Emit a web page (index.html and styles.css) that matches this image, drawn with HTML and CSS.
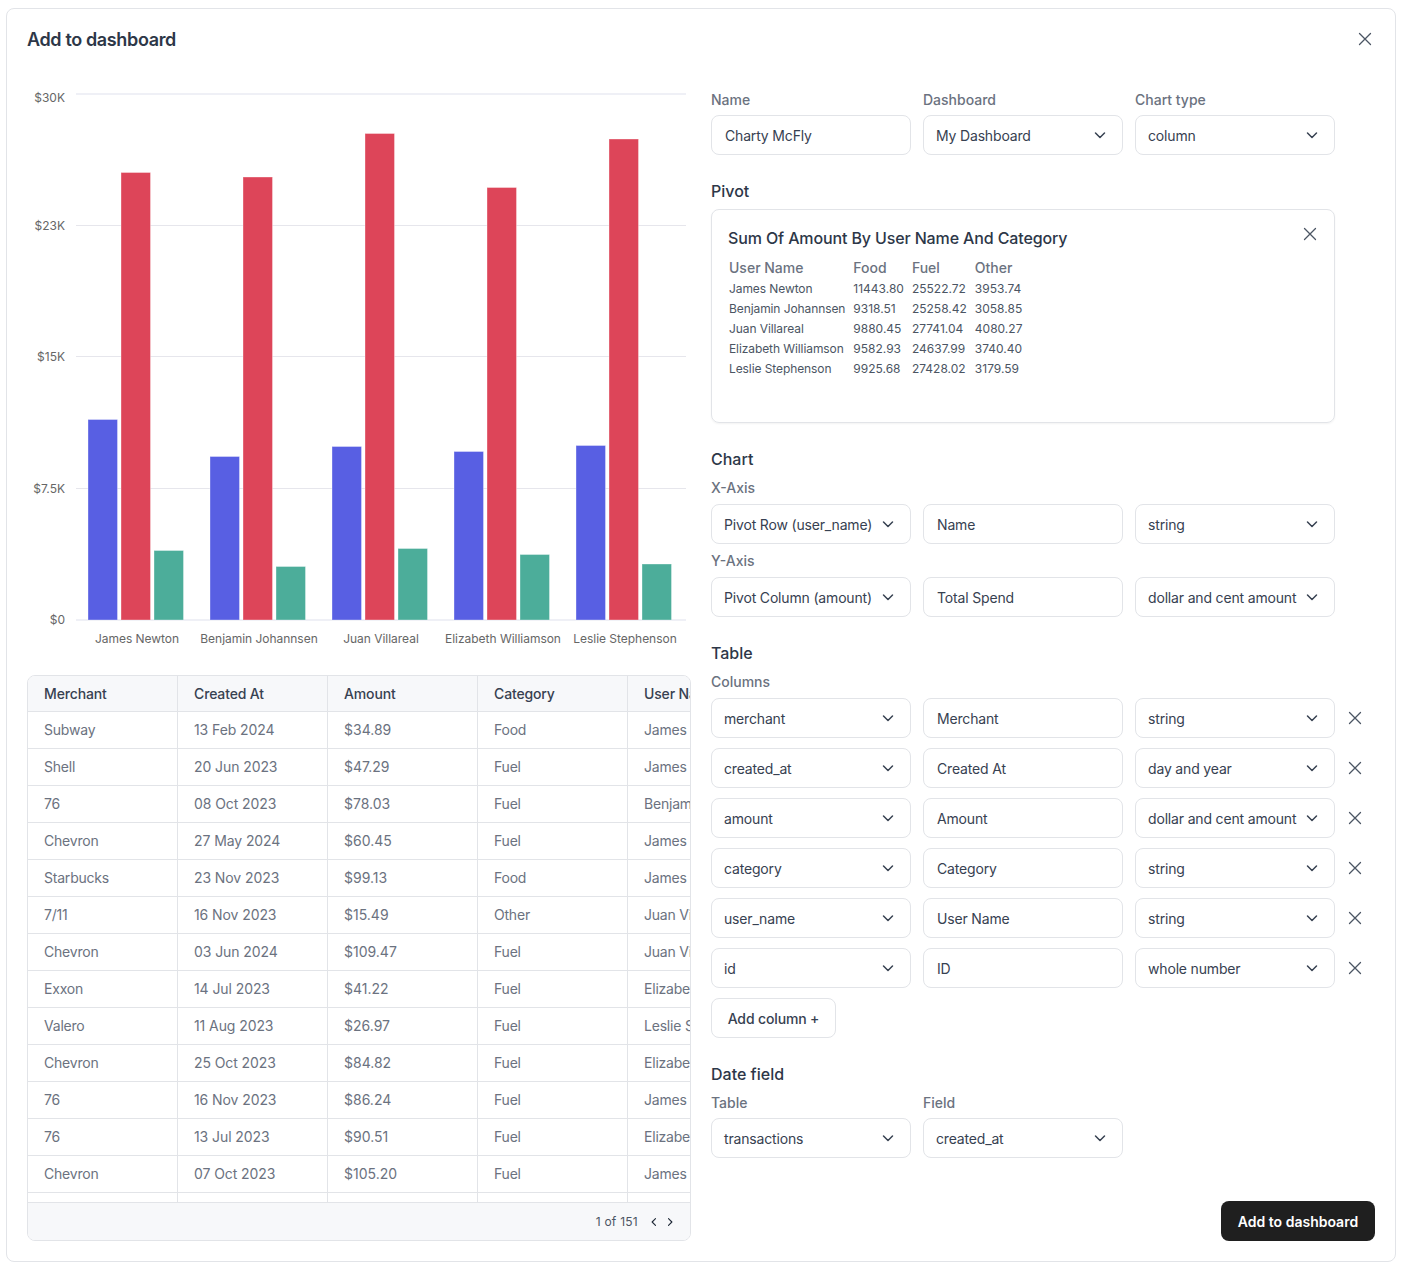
FILE: index.html
```html
<!DOCTYPE html>
<html lang="en">
<head>
<meta charset="utf-8">
<title>Add to dashboard</title>
<link rel="stylesheet" href="styles.css">
</head>
<body>
<svg class="sprite" aria-hidden="true">
  <symbol id="chev" viewBox="0 0 16 16"><path d="M3.500 6l4.500 4.500L12.500 6" fill="none" stroke="currentColor" stroke-width="1.500" stroke-linecap="round" stroke-linejoin="round"/></symbol>
  <symbol id="close" viewBox="0 0 16 16"><path d="M2.500 2.500l11 11M13.500 2.500l-11 11" fill="none" stroke="currentColor" stroke-width="1.300" stroke-linecap="round"/></symbol>
</svg>
<main class="modal">
  <header class="modal-head">
    <h1 class="modal-title">Add to dashboard</h1>
    <svg class="icon-close"><use href="#close"/></svg>
  </header>
  <div class="modal-body">
    <section class="left">
      <svg class="chart" viewBox="27 80 664 580" width="664" height="580">
        <g class="grid">
          <line class="grid-edge" x1="76" x2="686" y1="94" y2="94"/>
          <line x1="76" x2="686" y1="225.500" y2="225.500"/>
          <line x1="76" x2="686" y1="356.500" y2="356.500"/>
          <line x1="76" x2="686" y1="488.500" y2="488.500"/>
          <line class="grid-edge" x1="76" x2="686" y1="620" y2="620"/>
        </g>
        <g class="y-labels">
          <text x="65" y="102">$30K</text>
          <text x="65" y="230">$23K</text>
          <text x="65" y="361">$15K</text>
          <text x="65" y="493">$7.5K</text>
          <text x="65" y="624">$0</text>
        </g>
        <g class="bars-a">
          <rect x="88" y="419.500" width="29.500" height="200.500"/>
          <rect x="210" y="456.500" width="29.500" height="163.500"/>
          <rect x="332" y="446.500" width="29.500" height="173.500"/>
          <rect x="454" y="451.500" width="29.500" height="168.500"/>
          <rect x="576" y="445.500" width="29.500" height="174.500"/>
        </g>
        <g class="bars-b">
          <rect x="121" y="172.500" width="29.500" height="447.500"/>
          <rect x="243" y="177" width="29.500" height="443"/>
          <rect x="365" y="133.500" width="29.500" height="486.500"/>
          <rect x="487" y="187.500" width="29.500" height="432.500"/>
          <rect x="609" y="139" width="29.500" height="481"/>
        </g>
        <g class="bars-c">
          <rect x="154" y="550.500" width="29.500" height="69.500"/>
          <rect x="276" y="566.500" width="29.500" height="53.500"/>
          <rect x="398" y="548.500" width="29.500" height="71.500"/>
          <rect x="520" y="554.500" width="29.500" height="65.500"/>
          <rect x="642" y="564" width="29.500" height="56"/>
        </g>
        <g class="x-labels">
          <text x="137" y="643">James Newton</text>
          <text x="259" y="643">Benjamin Johannsen</text>
          <text x="381" y="643">Juan Villareal</text>
          <text x="503" y="643">Elizabeth Williamson</text>
          <text x="625" y="643">Leslie Stephenson</text>
        </g>
      </svg>
      <div class="grid-card">
        <div class="grid-scroll">
          <table class="data">
            <thead><tr><th>Merchant</th><th>Created At</th><th>Amount</th><th>Category</th><th>User Name</th></tr></thead>
            <tbody>
              <tr><td>Subway</td><td>13 Feb 2024</td><td>$34.89</td><td>Food</td><td>James Newton</td></tr>
              <tr><td>Shell</td><td>20 Jun 2023</td><td>$47.29</td><td>Fuel</td><td>James Newton</td></tr>
              <tr><td>76</td><td>08 Oct 2023</td><td>$78.03</td><td>Fuel</td><td>Benjamin Johannsen</td></tr>
              <tr><td>Chevron</td><td>27 May 2024</td><td>$60.45</td><td>Fuel</td><td>James Newton</td></tr>
              <tr><td>Starbucks</td><td>23 Nov 2023</td><td>$99.13</td><td>Food</td><td>James Newton</td></tr>
              <tr><td>7/11</td><td>16 Nov 2023</td><td>$15.49</td><td>Other</td><td>Juan Villareal</td></tr>
              <tr><td>Chevron</td><td>03 Jun 2024</td><td>$109.47</td><td>Fuel</td><td>Juan Villareal</td></tr>
              <tr><td>Exxon</td><td>14 Jul 2023</td><td>$41.22</td><td>Fuel</td><td>Elizabeth Williamson</td></tr>
              <tr><td>Valero</td><td>11 Aug 2023</td><td>$26.97</td><td>Fuel</td><td>Leslie Stephenson</td></tr>
              <tr><td>Chevron</td><td>25 Oct 2023</td><td>$84.82</td><td>Fuel</td><td>Elizabeth Williamson</td></tr>
              <tr><td>76</td><td>16 Nov 2023</td><td>$86.24</td><td>Fuel</td><td>James Newton</td></tr>
              <tr><td>76</td><td>13 Jul 2023</td><td>$90.51</td><td>Fuel</td><td>Elizabeth Williamson</td></tr>
              <tr><td>Chevron</td><td>07 Oct 2023</td><td>$105.20</td><td>Fuel</td><td>James Newton</td></tr>
              <tr><td></td><td></td><td></td><td></td><td></td></tr>
            </tbody>
          </table>
        </div>
        <footer class="grid-foot">
          <span class="page-count">1 of 151</span>
          <span class="pager">
            <svg class="icon-pg flip"><use href="#chev"/></svg>
            <svg class="icon-pg unflip"><use href="#chev"/></svg>
          </span>
        </footer>
      </div>
    </section>

    <section class="right">
      <div class="row3 row-top">
        <div class="field"><label class="lbl">Name</label><div class="input">Charty McFly</div></div>
        <div class="field"><label class="lbl">Dashboard</label><div class="select">My Dashboard<svg class="icon-chev"><use href="#chev"/></svg></div></div>
        <div class="field"><label class="lbl">Chart type</label><div class="select">column<svg class="icon-chev"><use href="#chev"/></svg></div></div>
      </div>

      <h2 class="sec sec-pivot">Pivot</h2>
      <div class="pivot">
        <div class="pivot-head">
          <h3 class="pivot-title">Sum Of Amount By User Name And Category</h3>
          <svg class="icon-close"><use href="#close"/></svg>
        </div>
        <table class="pt">
          <thead><tr><th>User Name</th><th>Food</th><th>Fuel</th><th>Other</th></tr></thead>
          <tbody>
            <tr><td>James Newton</td><td>11443.80</td><td>25522.72</td><td>3953.74</td></tr>
            <tr><td>Benjamin Johannsen</td><td>9318.51</td><td>25258.42</td><td>3058.85</td></tr>
            <tr><td>Juan Villareal</td><td>9880.45</td><td>27741.04</td><td>4080.27</td></tr>
            <tr><td>Elizabeth Williamson</td><td>9582.93</td><td>24637.99</td><td>3740.40</td></tr>
            <tr><td>Leslie Stephenson</td><td>9925.68</td><td>27428.02</td><td>3179.59</td></tr>
          </tbody>
        </table>
      </div>

      <h2 class="sec sec-chart">Chart</h2>
      <label class="lbl lbl-sub">X-Axis</label>
      <div class="row3">
        <div class="select">Pivot Row (user_name)<svg class="icon-chev"><use href="#chev"/></svg></div>
        <div class="input">Name</div>
        <div class="select">string<svg class="icon-chev"><use href="#chev"/></svg></div>
      </div>
      <label class="lbl lbl-sub lbl-y">Y-Axis</label>
      <div class="row3">
        <div class="select">Pivot Column (amount)<svg class="icon-chev"><use href="#chev"/></svg></div>
        <div class="input">Total Spend</div>
        <div class="select">dollar and cent amount<svg class="icon-chev"><use href="#chev"/></svg></div>
      </div>

      <h2 class="sec sec-table">Table</h2>
      <label class="lbl lbl-sub">Columns</label>
      <div class="cols">
        <div class="row3 row-x">
          <div class="select">merchant<svg class="icon-chev"><use href="#chev"/></svg></div>
          <div class="input">Merchant</div>
          <div class="select">string<svg class="icon-chev"><use href="#chev"/></svg></div>
          <svg class="icon-close icon-row"><use href="#close"/></svg>
        </div>
        <div class="row3 row-x">
          <div class="select">created_at<svg class="icon-chev"><use href="#chev"/></svg></div>
          <div class="input">Created At</div>
          <div class="select">day and year<svg class="icon-chev"><use href="#chev"/></svg></div>
          <svg class="icon-close icon-row"><use href="#close"/></svg>
        </div>
        <div class="row3 row-x">
          <div class="select">amount<svg class="icon-chev"><use href="#chev"/></svg></div>
          <div class="input">Amount</div>
          <div class="select">dollar and cent amount<svg class="icon-chev"><use href="#chev"/></svg></div>
          <svg class="icon-close icon-row"><use href="#close"/></svg>
        </div>
        <div class="row3 row-x">
          <div class="select">category<svg class="icon-chev"><use href="#chev"/></svg></div>
          <div class="input">Category</div>
          <div class="select">string<svg class="icon-chev"><use href="#chev"/></svg></div>
          <svg class="icon-close icon-row"><use href="#close"/></svg>
        </div>
        <div class="row3 row-x">
          <div class="select">user_name<svg class="icon-chev"><use href="#chev"/></svg></div>
          <div class="input">User Name</div>
          <div class="select">string<svg class="icon-chev"><use href="#chev"/></svg></div>
          <svg class="icon-close icon-row"><use href="#close"/></svg>
        </div>
        <div class="row3 row-x">
          <div class="select">id<svg class="icon-chev"><use href="#chev"/></svg></div>
          <div class="input">ID</div>
          <div class="select">whole number<svg class="icon-chev"><use href="#chev"/></svg></div>
          <svg class="icon-close icon-row"><use href="#close"/></svg>
        </div>
        <button class="btn-add" type="button">Add column +</button>
      </div>

      <h2 class="sec sec-date">Date field</h2>
      <div class="row3">
        <div class="field"><label class="lbl">Table</label><div class="select">transactions<svg class="icon-chev"><use href="#chev"/></svg></div></div>
        <div class="field"><label class="lbl">Field</label><div class="select">created_at<svg class="icon-chev"><use href="#chev"/></svg></div></div>
      </div>

      <div class="actions"><button class="btn-primary" type="button">Add to dashboard</button></div>
    </section>
  </div>
</main>
</body>
</html>
```
FILE: styles.css
```css
* { box-sizing: border-box; }
html, body { margin: 0; padding: 0; background: #fff; }
body {
  font-family: Inter, "Liberation Sans", sans-serif;
  font-size: 14px;
  line-height: 20px;
  color: #374151;
  width: 1406px;
  height: 1270px;
  overflow: hidden;
  padding: 8px 10px 8px 6px;
}
.sprite { display: none; }

.modal {
  width: 1390px;
  height: 1254px;
  border: 1px solid #e2e4e8;
  border-radius: 8px;
  background: #fff;
  padding: 17px 20px 0;
}
.modal-head {
  display: flex;
  justify-content: space-between;
  align-items: center;
  height: 28px;
}
.modal-title { margin: 0; font-size: 18px; line-height: 28px; font-weight: 600; color: #2d3748; letter-spacing: -0.02em; }
.modal-head .icon-close { margin: -2px 2px 0 0; }
.icon-close { width: 16px; height: 16px; color: #4b5563; flex: none; display: block; }

.modal-body { display: flex; gap: 20px; margin-top: 26px; }
.left { width: 664px; flex: none; }
.right { width: 664px; flex: none; padding-top: 10px; }

/* chart */
.chart { display: block; margin-bottom: 15px; }
.grid line { stroke: #e6e6ec; stroke-width: 1; }
.grid .grid-edge { stroke: #eff0f6; stroke-width: 2; }
.y-labels text { font-size: 12px; fill: #666; text-anchor: end; }
.x-labels text { font-size: 12px; fill: #666; text-anchor: middle; letter-spacing: -0.03px; }
.bars-a rect, .bars-b rect, .bars-c rect { stroke: #fff; stroke-width: 1; stroke-opacity: .35; }
.bars-a { fill: #585fe3; }
.bars-b { fill: #dd4559; }
.bars-c { fill: #4cad9a; }

/* data table */
.grid-card {
  width: 664px;
  height: 566px;
  border: 1px solid #e2e4e8;
  border-radius: 8px;
  overflow: hidden;
  display: flex;
  flex-direction: column;
}
.grid-scroll { height: 526px; overflow: hidden; flex: none; }
.data { border-collapse: separate; border-spacing: 0; table-layout: fixed; width: 750px; }
.data th, .data td {
  width: 150px;
  padding: 0 0 0 16px;
  text-align: left;
  white-space: nowrap;
  overflow: hidden;
  border-right: 1px solid #e2e4e8;
  border-bottom: 1px solid #e2e4e8;
}
.data th { height: 36px; background: #f7f8fa; font-weight: 500; color: #374151; letter-spacing: -0.01em; }
.data td { height: 37px; color: #6b7280; letter-spacing: -0.015em; }
.data td:nth-child(2) { letter-spacing: -0.006em; }
.data td:nth-child(3) { letter-spacing: 0; }
.grid-foot {
  flex: 1;
  background: #f7f8fa;
  border-top: 1px solid #e2e4e8;
  display: flex;
  justify-content: flex-end;
  align-items: center;
  gap: 10px;
  padding-right: 14px;
  font-size: 12px;
  color: #4b5563;
}
.page-count { letter-spacing: 0.25px; }
.pager { display: flex; gap: 4px; }
.icon-pg { width: 12px; height: 12px; display: block; color: #1f2937; }
.flip { transform: rotate(90deg); }
.unflip { transform: rotate(-90deg); }

/* form */
.row3 { display: grid; grid-template-columns: repeat(3, 200px); column-gap: 12px; align-items: center; }
.row-x { grid-template-columns: repeat(3, 200px) 16px; width: 652px; }
.lbl { display: block; font-weight: 500; color: #6b7280; line-height: 20px; margin-bottom: 5px; }
.lbl-sub { margin-bottom: 6px; }
.input, .select {
  height: 40px;
  border: 1px solid #e2e4e8;
  border-radius: 8px;
  background: #fff;
  display: flex;
  align-items: center;
  color: #374151;
  white-space: nowrap;
  padding-top: 1px;
  letter-spacing: -0.012em;
}
.input { padding-left: 13px; }
.select { padding: 1px 14px 0 12px; justify-content: space-between; }
.icon-chev { width: 16px; height: 16px; color: #374151; flex: none; margin-top: -2px; }

.sec { margin: 0; font-size: 16px; line-height: 24px; font-weight: 500; color: #2d3748; }
.sec-pivot { margin-top: 24px; margin-bottom: 6px; }
.pivot {
  height: 214px;
  border: 1px solid #e2e4e8;
  border-radius: 8px;
  box-shadow: 0 1px 2px rgba(0, 0, 0, .05);
  padding: 16px;
  width: 624px;
}
.pivot-head { display: flex; justify-content: space-between; align-items: flex-start; }
.pivot-title { margin: 0; font-size: 16px; line-height: 24px; font-weight: 500; color: #2d3748; letter-spacing: -0.13px; }
.pt { border-collapse: collapse; margin-top: 6px; margin-left: 1px; }
.pt th, .pt td { padding: 0 8px 0 0; text-align: left; white-space: nowrap; }
.pt th { font-weight: 500; color: #6b7280; height: 23px; }
.pt td { font-size: 12px; color: #4b5563; height: 20px; }
.pt td:first-child { letter-spacing: -0.09px; }

.sec-chart { margin-top: 24px; margin-bottom: 7px; }
.lbl-y { margin-top: 7px; }
.sec-table { margin-top: 24px; margin-bottom: 7px; }
.cols { display: flex; flex-direction: column; gap: 10px; align-items: flex-start; }
.icon-row { justify-self: start; }
.btn-add {
  height: 40px;
  width: 125px;
  border: 1px solid #e2e4e8;
  border-radius: 8px;
  background: #fff;
  font: 500 14px/20px Inter, "Liberation Sans", sans-serif;
  letter-spacing: -0.01em;
  color: #374151;
  padding: 2px 0 0;
}
.sec-date { margin-top: 24px; margin-bottom: 7px; }
.actions { display: flex; justify-content: flex-end; margin-top: 43px; }
.btn-primary {
  height: 40px;
  width: 154px;
  border: 0;
  border-radius: 8px;
  background: #1f1f1f;
  color: #fff;
  font: 600 14px/20px Inter, "Liberation Sans", sans-serif;
  padding: 2px 0 0;
}
```
